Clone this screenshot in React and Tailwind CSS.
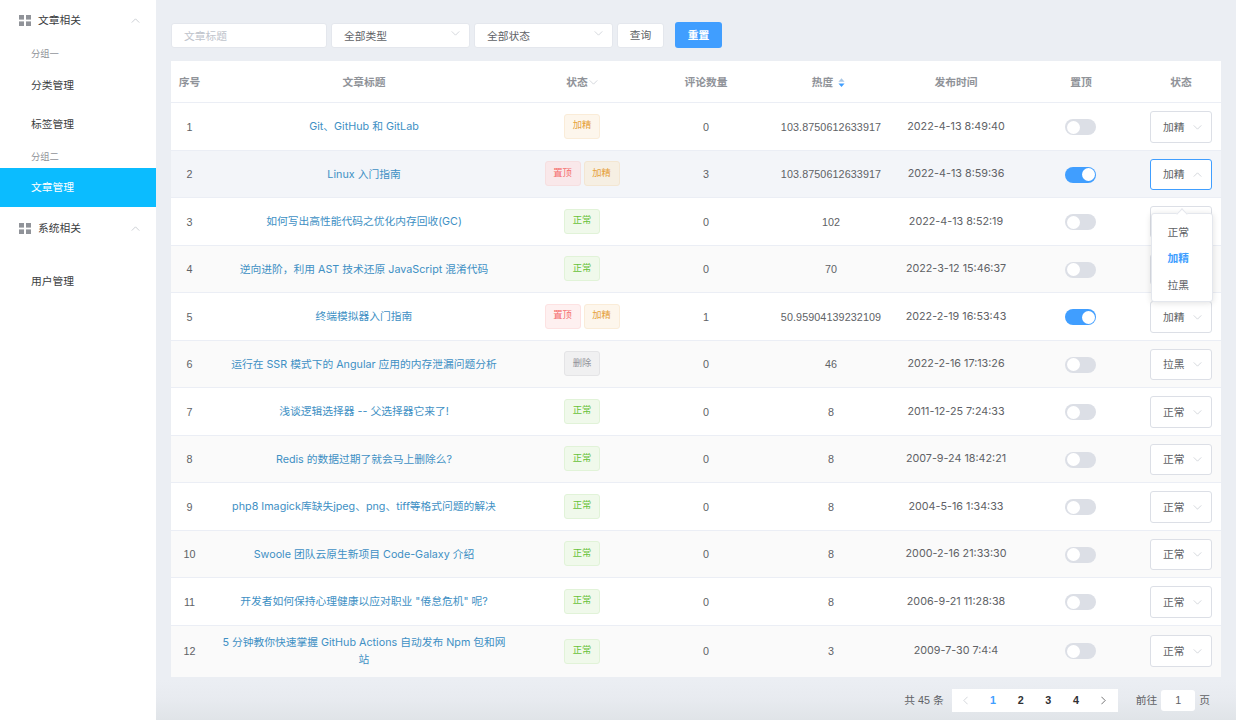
import React from "react";

const rows = [
  ["1", "Git、GitHub 和 GitLab", ["jing"], "0", "103.8750612633917", "2022-4-13 8:49:40", false, "加精"],
  ["2", "Linux 入门指南", ["top", "jing"], "3", "103.8750612633917", "2022-4-13 8:59:36", true, "加精"],
  ["3", "如何写出高性能代码之优化内存回收(GC)", ["ok"], "0", "102", "2022-4-13 8:52:19", false, ""],
  ["4", "逆向进阶\uFF0C利用 AST 技术还原 JavaScript 混淆代码", ["ok"], "0", "70", "2022-3-12 15:46:37", false, ""],
  ["5", "终端模拟器入门指南", ["top", "jing"], "1", "50.95904139232109", "2022-2-19 16:53:43", true, "加精"],
  ["6", "运行在 SSR 模式下的 Angular 应用的内存泄漏问题分析", ["del"], "0", "46", "2022-2-16 17:13:26", false, "拉黑"],
  ["7", "浅谈逻辑选择器 -- 父选择器它来了!", ["ok"], "0", "8", "2011-12-25 7:24:33", false, "正常"],
  ["8", "Redis 的数据过期了就会马上删除么?", ["ok"], "0", "8", "2007-9-24 18:42:21", false, "正常"],
  ["9", "php8 Imagick库缺失jpeg、png、tiff等格式问题的解决", ["ok"], "0", "8", "2004-5-16 1:34:33", false, "正常"],
  ["10", "Swoole 团队云原生新项目 Code-Galaxy 介绍", ["ok"], "0", "8", "2000-2-16 21:33:30", false, "正常"],
  ["11", "开发者如何保持心理健康以应对职业 \"倦怠危机\" 呢?", ["ok"], "0", "8", "2006-9-21 11:28:38", false, "正常"],
  ["12", "5 分钟教你快速掌握 GitHub Actions 自动发布 Npm 包和网站", ["ok"], "0", "3", "2009-7-30 7:4:4", false, "正常"],
];

const tagStyles = {
  jing: ["加精", "bg-[#fdf6ec] border-[#faecd8] text-[#e6a23c]"],
  top: ["置顶", "bg-[#fef0f0] border-[#fde2e2] text-[#f56c6c]"],
  ok: ["正常", "bg-[#f0f9eb] border-[#e1f3d8] text-[#67c23a]"],
  del: ["删除", "bg-[#f0f0f1] border-[#e4e4e6] text-[#909399]"],
  jingDim: ["加精", "bg-[#f6efe3] border-[#f3e6d2] text-[#e6a23c]"],
  topDim: ["置顶", "bg-[#f9e8ea] border-[#f6dfe0] text-[#f56c6c]"],
};

const cols = "grid grid-cols-[37px_312px_124px_124px_126px_124px_126px_77px] items-center text-center";

function Chevron({ up, className = "" }) {
  return (
    <svg viewBox="0 0 10 6" className={"w-[9px] h-[5px] " + className} fill="none" stroke="currentColor" strokeWidth="0.8">
      <path d={up ? "M0.5 5.5 L5 1 L9.5 5.5" : "M0.5 0.5 L5 5 L9.5 0.5"} />
    </svg>
  );
}

function GridIcon() {
  return (
    <svg viewBox="0 0 12 11" className="w-[12px] h-[11px] text-[#909399]" fill="currentColor">
      <rect x="0" y="0" width="5" height="4.6" />
      <rect x="7" y="0" width="5" height="4.6" />
      <rect x="0" y="6.4" width="5" height="4.6" />
      <rect x="7" y="6.4" width="5" height="4.6" />
    </svg>
  );
}

function Tag({ kind }) {
  const [label, cls] = tagStyles[kind];
  return (
    <span className={"inline-flex items-center justify-center w-[36px] h-[25px] rounded-[3px] border text-[9.3px] " + cls}>{label}</span>
  );
}

function Switch({ on }) {
  return (
    <div className={"relative w-[31px] h-[16px] rounded-full ml-[47px] " + (on ? "bg-[#409eff]" : "bg-[#dcdfe6]")}>
      <span className={"absolute top-[1.5px] w-[13px] h-[13px] rounded-full bg-white " + (on ? "right-[1.5px]" : "left-[1.5px]")} />
    </div>
  );
}

function RowSelect({ value, open }) {
  return (
    <div className={"relative ml-[6px] w-[61.5px] h-[31.5px] flex items-center justify-between pl-[12px] pr-[9px] bg-white rounded-[3px] border " + (open ? "border-[#409eff]" : "border-[#dcdfe6]")}>
      <span>{value}</span>
      <Chevron up={open} className="text-[#c0c4cc]" />
      {open && (
        <div className="absolute z-10 left-0 top-[53px] w-[61.5px] h-[89px] pt-[2px] bg-white rounded-[3px] border border-[#e4e7ed] shadow-[0_1px_6px_rgba(0,0,0,0.12)] flex flex-col justify-center pl-[15.5px] text-left">
          <span className="absolute -top-[4px] left-[26px] w-[8px] h-[8px] rotate-45 bg-white border-l border-t border-[#e4e7ed]" />
          <div className="h-[26.5px] leading-[26.5px]">正常</div>
          <div className="h-[26.5px] leading-[26.5px] text-[#409eff] font-bold">加精</div>
          <div className="h-[26.5px] leading-[26.5px]">拉黑</div>
        </div>
      )}
    </div>
  );
}

function MenuHead({ label, className = "" }) {
  return (
    <div className={"flex items-center pl-[19px] pr-[16px] text-[#3a3c40] " + className}>
      <GridIcon />
      <span className="ml-[7px] flex-1">{label}</span>
      <Chevron up className="text-[#b4b8bf]" />
    </div>
  );
}

function MenuItem({ label, className = "" }) {
  return <div className={"flex items-center pl-[31px] text-[#3a3c40] " + className}>{label}</div>;
}

function GroupLabel({ label, className = "" }) {
  return <div className={"flex items-center pl-[31px] text-[9.3px] text-[#909399] " + className}>{label}</div>;
}

function FilterSelect({ label, width }) {
  return (
    <div className={"flex items-center justify-between h-[25px] pl-[12px] pr-[9px] pt-[2px] bg-white rounded-[3px] border border-[#e4e7ed] text-[#606266] " + width}>
      <span>{label}</span>
      <Chevron className="w-[8px] h-[4px] -mt-[5px] text-[#c0c4cc]" />
    </div>
  );
}

export default function App() {
  return (
    <div className="flex w-[1236px] h-[720px] overflow-hidden bg-[#ebeef3] text-[10.75px] text-[#606266] font-['Liberation_Sans','Noto_Sans_CJK_SC',sans-serif]">
      <aside className="w-[156px] shrink-0 bg-white flex flex-col">
        <MenuHead label="文章相关" className="h-[40px]" />
        <GroupLabel label="分组一" className="h-[29px] pt-[1px]" />
        <MenuItem label="分类管理" className="h-[32px]" />
        <MenuItem label="标签管理" className="h-[46px]" />
        <GroupLabel label="分组二" className="h-[21px]" />
        <MenuItem label="文章管理" className="h-[39px] bg-[#0bbcff] !text-white" />
        <MenuHead label="系统相关" className="h-[43px]" />
        <MenuItem label="用户管理" className="h-[39px] mt-[12px]" />
      </aside>

      <main className="w-[1080px] pl-[15px] pr-[15px] pt-[22px] flex flex-col bg-[linear-gradient(to_bottom,#ebeef3_680px,#e8ebf0_698px,#e0e4e8_720px)]">
        <div className="flex items-center h-[26px]">
          <div className="flex items-center w-[156px] h-[25px] pl-[12px] pt-[2px] bg-white rounded-[3px] border border-[#e4e7ed] text-[#c0c4cc]">文章标题</div>
          <div className="ml-[4px]"><FilterSelect label="全部类型" width="w-[139px]" /></div>
          <div className="ml-[4px]"><FilterSelect label="全部状态" width="w-[139px]" /></div>
          <div className="ml-[4px] flex items-center justify-center w-[47px] h-[25px] pt-[1px] bg-white rounded-[3px] border border-[#e4e7ed]">查询</div>
          <div className="ml-[11px] flex items-center justify-center w-[47px] h-[26px] bg-[#409eff] rounded-[3px] text-white font-bold">重置</div>
        </div>

        <div className="mt-[13px] w-[1050px] bg-white">
          <div className={cols + " h-[42px] pt-[1px] border-b border-[#ebeef5] text-[#909399] font-bold"}>
            <div>序号</div>
            <div>文章标题</div>
            <div className="flex items-center justify-center">
              状态<Chevron className="w-[6px] h-[4px] ml-[1px] text-[#c0c4cc]" />
            </div>
            <div>评论数量</div>
            <div className="flex items-center justify-center pr-[5px]">
              热度
              <svg viewBox="0 0 8 10" className="w-[7px] h-[9px] ml-[5px]">
                <path d="M4 0 L7.5 4 H0.5 Z" fill="#a9c6e4" />
                <path d="M4 10 L7.5 6 H0.5 Z" fill="#409eff" />
              </svg>
            </div>
            <div>发布时间</div>
            <div>置顶</div>
            <div className="pr-[3px]">状态</div>
          </div>
          {rows.map((r, i) => {
            const bg = i === 1 ? "bg-[#f3f5f9]" : i % 2 === 1 ? "bg-[#fafafa]" : "bg-white";
            const h = i === 11 ? "h-[51px]" : "h-[47.5px] pt-[1.5px] border-b border-[#ebeef5]";
            return (
              <div key={r[0]} className={cols + " " + h + " " + bg}>
                <div>{r[0]}</div>
                <div className="px-[11px] text-[#4090c4] leading-[17.5px] font-['Inter','Noto_Sans_CJK_SC',sans-serif]">{r[1]}</div>
                <div className={"flex justify-center gap-[3px] " + (i === 11 ? "" : "mb-[1.5px]")}>
                  {r[2].map((k) => <Tag key={k} kind={i === 1 ? k + "Dim" : k} />)}
                </div>
                <div>{r[3]}</div>
                <div className="tracking-[0.1px]">{r[4]}</div>
                <div className="font-['Inter','Noto_Sans_CJK_SC',sans-serif]">{r[5]}</div>
                <div><Switch on={r[6]} /></div>
                <div><RowSelect value={r[7]} open={i === 1} /></div>
              </div>
            );
          })}
        </div>

        <div className="mt-[12px] w-[1050px] flex items-center justify-end h-[23px] pr-[11px]">
          <span>共 45 条</span>
          <div className="ml-[8px] w-[166px] h-[23px] pt-[1px] bg-white flex items-center font-bold text-[#303133]">
            <span className="w-[27.6px] flex justify-center">
              <Chevron up className="w-[8px] h-[4px] -rotate-90 text-[#c0c4cc]" />
            </span>
            <span className="w-[27.6px] text-center text-[#409eff]">1</span>
            <span className="w-[27.6px] text-center">2</span>
            <span className="w-[27.6px] text-center">3</span>
            <span className="w-[27.6px] text-center">4</span>
            <span className="w-[27.6px] flex justify-center">
              <Chevron up className="w-[8px] h-[4px] rotate-90 text-[#303133]" />
            </span>
          </div>
          <span className="ml-[18px]">前往</span>
          <div className="ml-[4px] w-[34px] h-[21px] bg-white rounded-[3px] flex items-center justify-center">1</div>
          <span className="ml-[4px]">页</span>
        </div>
      </main>
    </div>
  );
}
